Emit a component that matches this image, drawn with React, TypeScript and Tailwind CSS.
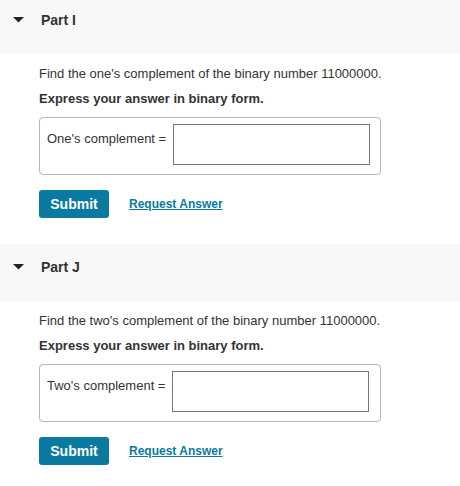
import React from "react";

type PartProps = {
  title: string;
  question: string;
  label: string;
  cut?: boolean; // first header is scrolled a bit off the top
};

function Caret() {
  return (
    <svg width="11" height="6" viewBox="0 0 11 6" className="block">
      <path d="M0 0 H11 L5.5 5.5 Z" fill="#222" />
    </svg>
  );
}

function Part({ title, question, label, cut = false }: PartProps) {
  return (
    <section>
      <div
        className={
          "flex items-start bg-[#f8f8f8] pl-[13px] " +
          (cut ? "h-[54px] pt-[12px]" : "h-[57px] pt-[15px]")
        }
      >
        <div className="flex h-[16px] items-center">
          <Caret />
        </div>
        <h2 className="ml-[17px] text-[14px] font-bold leading-[16px] text-[#333]">
          {title}
        </h2>
      </div>

      <div className="pl-[39px] pt-[12px]">
        <p className="text-[13px] leading-[16px] text-[#333]">{question}</p>
        <p className="mt-[9px] text-[13px] font-bold leading-[16px] text-[#333]">
          Express your answer in binary form.
        </p>

        <div className="mt-[10px] flex h-[58px] w-[342px] items-start rounded-[4px] border border-[#b5b5b5] pl-[7px] pt-[6px]">
          <label className="mt-[7px] text-[13px] leading-[16px] text-[#333]">
            {label}
          </label>
          <input
            type="text"
            className="ml-[7px] h-[41px] w-[197px] border border-[#777] bg-white outline-none"
          />
        </div>

        <div className="mt-[15px] flex items-center">
          <button className="h-[28px] w-[70px] rounded-[3px] bg-[#0a7aa1] text-[14px] font-bold text-white">
            Submit
          </button>
          <a
            href="#"
            className="ml-[20px] text-[12px] font-bold text-[#0a7aa1] underline"
          >
            Request Answer
          </a>
        </div>
      </div>
    </section>
  );
}

export default function App() {
  return (
    <div
      className="h-[486px] w-[460px] overflow-hidden bg-white"
      style={{ fontFamily: '"Liberation Sans", Arial, sans-serif' }}
    >
      <Part
        cut
        title="Part I"
        question="Find the one's complement of the binary number 11000000."
        label="One's complement ="
      />
      <div className="h-[26px]" />
      <Part
        title="Part J"
        question="Find the two's complement of the binary number 11000000."
        label="Two's complement ="
      />
    </div>
  );
}
